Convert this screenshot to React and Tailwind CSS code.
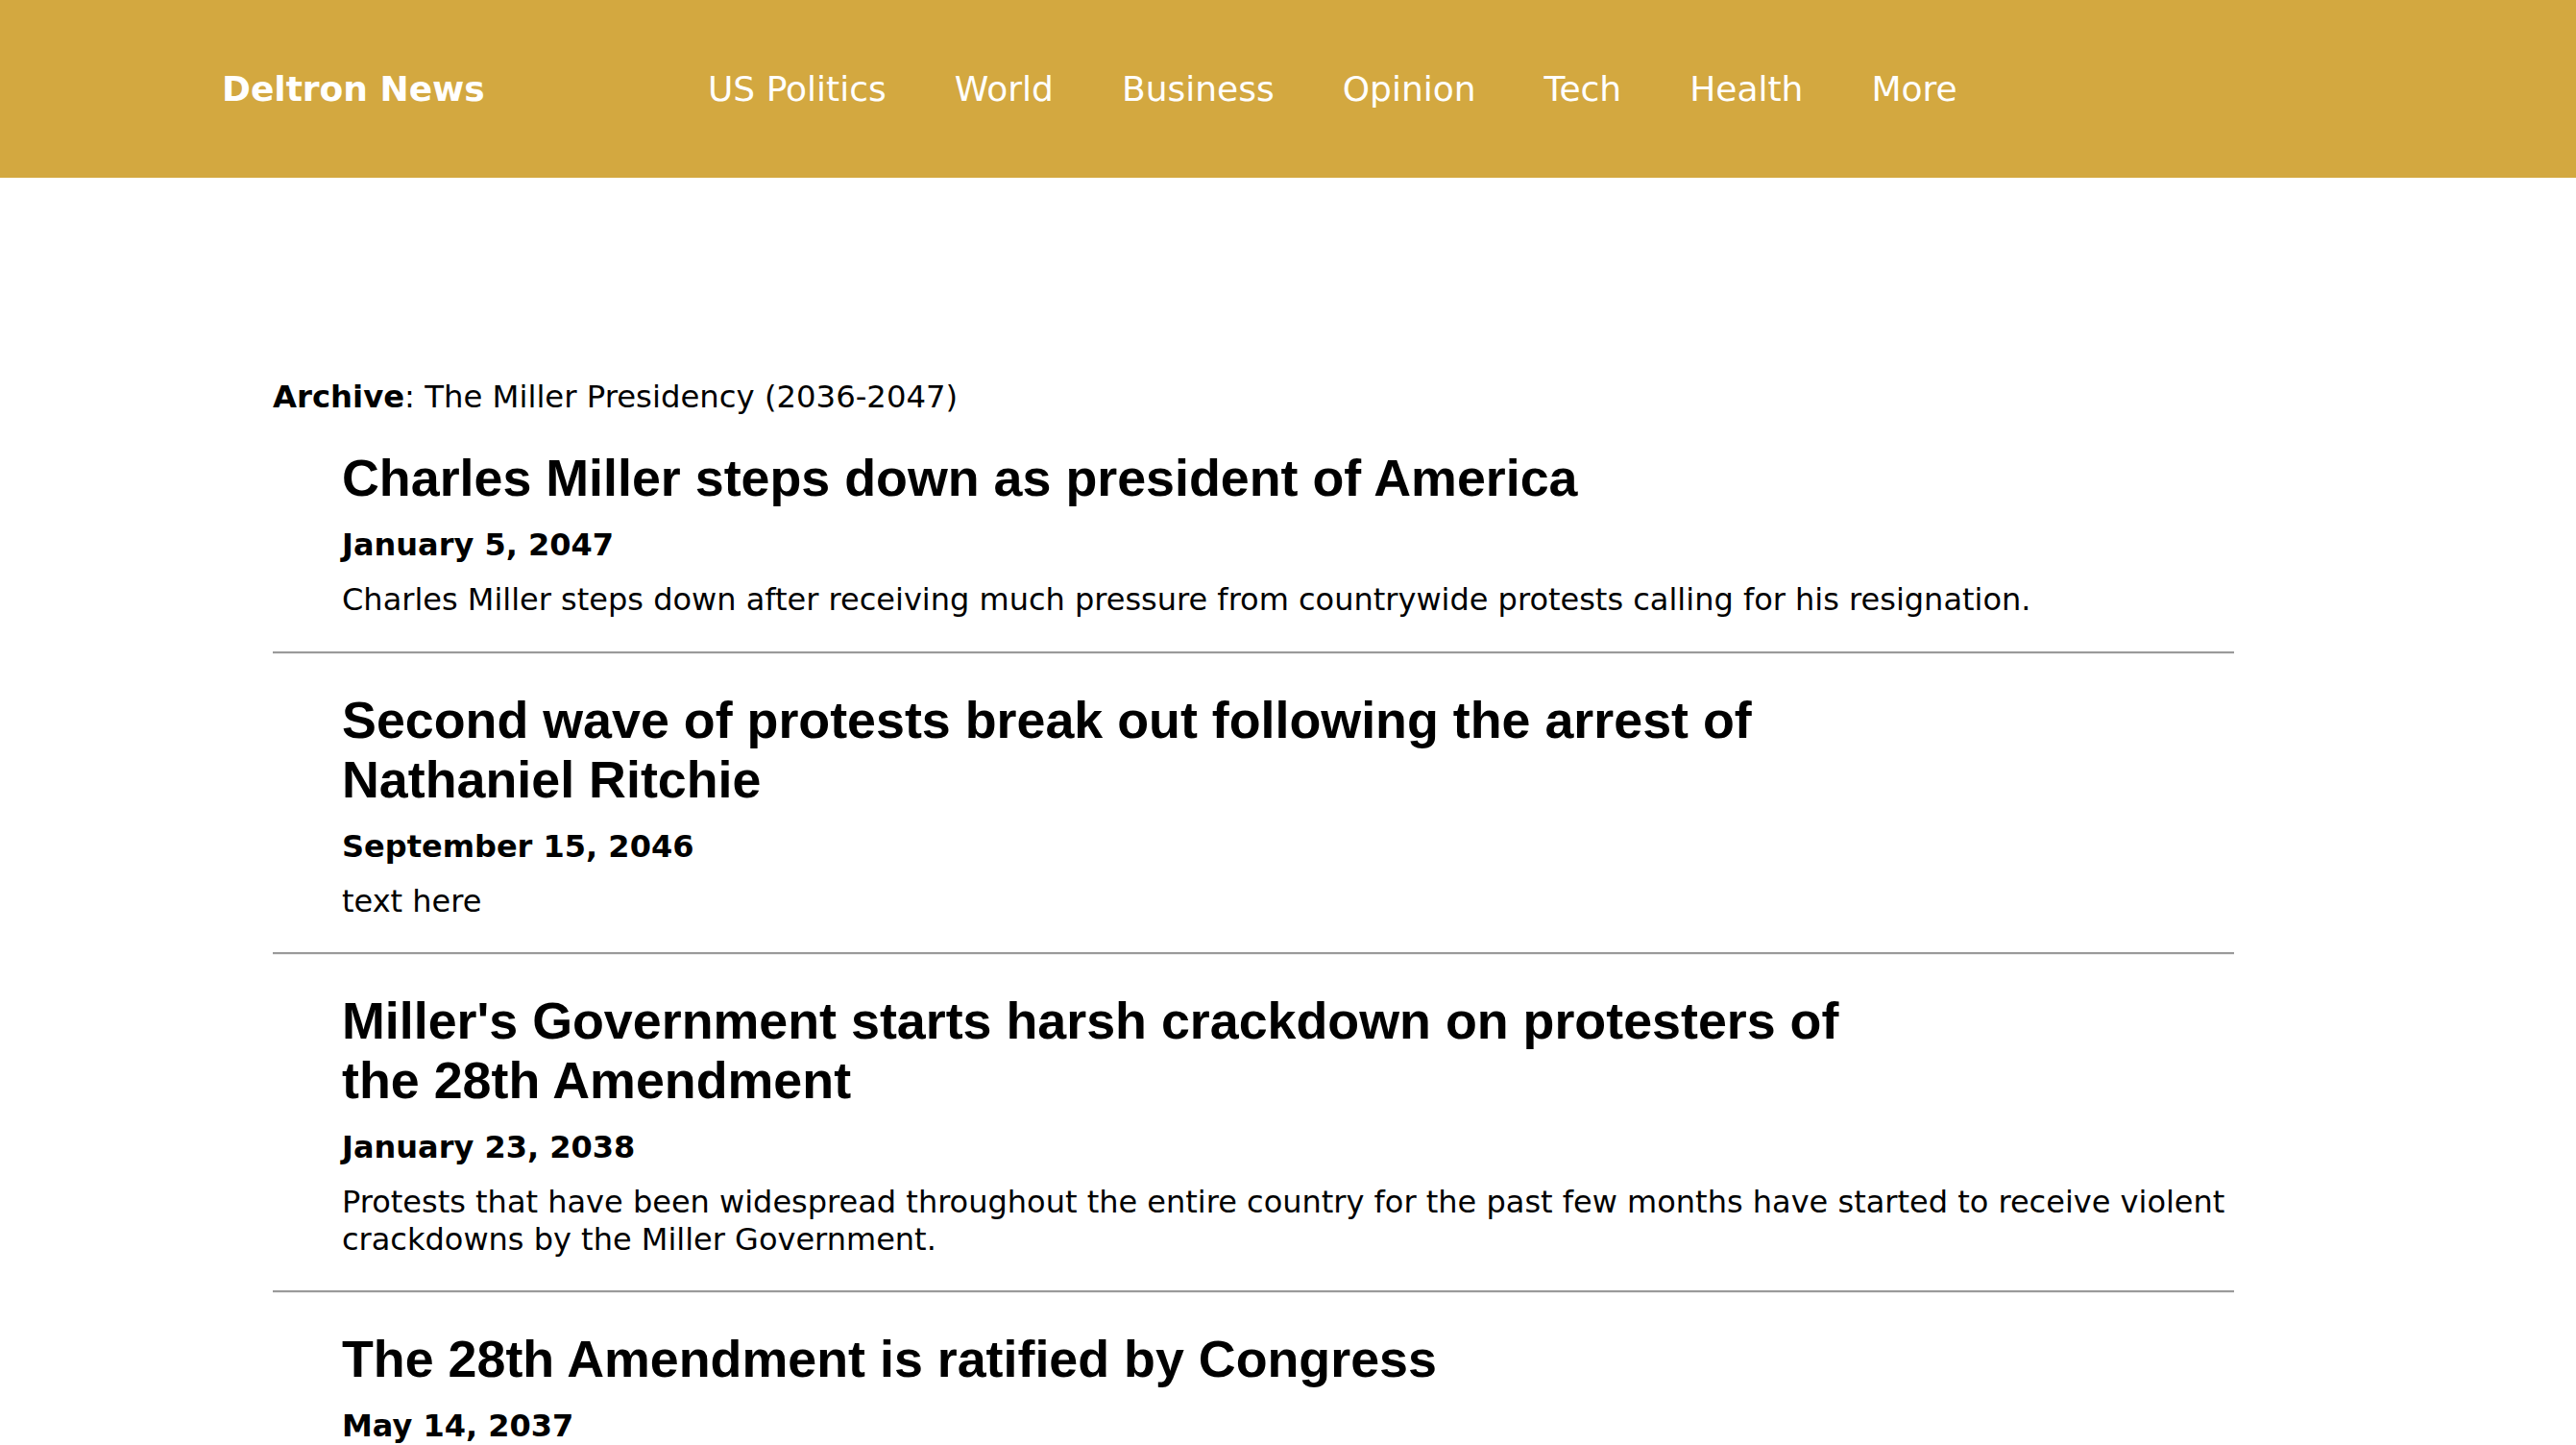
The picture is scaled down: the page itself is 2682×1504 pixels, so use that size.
import React from "react";

const navItems = ["US Politics", "World", "Business", "Opinion", "Tech", "Health", "More"];

const articles = [
  {
    title: "Charles Miller steps down as president of America",
    date: "January 5, 2047",
    text: "Charles Miller steps down after receiving much pressure from countrywide protests calling for his resignation.",
  },
  {
    title: "Second wave of protests break out following the arrest of Nathaniel Ritchie",
    date: "September 15, 2046",
    text: "text here",
  },
  {
    title: "Miller's Government starts harsh crackdown on protesters of the 28th Amendment",
    date: "January 23, 2038",
    text: "Protests that have been widespread throughout the entire country for the past few months have started to receive violent crackdowns by the Miller Government.",
  },
  {
    title: "The 28th Amendment is ratified by Congress",
    date: "May 14, 2037",
    text: "The 28th Amendment passes both houses of Congress and is sent to the states for ratification.",
  },
];

function Article({ title, date, text, first }) {
  return (
    <div className={first ? "pl-[72px] pt-[33px] pb-[34px]" : "pl-[72px] pt-[37px] pb-[33px]"}>
      <h2 className="max-w-[1600px] text-[53.8px] leading-[62px] font-bold font-['Liberation_Sans',Arial,sans-serif]">
        {title}
      </h2>
      <div className="mt-[20px] text-[32px] leading-[38px] font-bold">{date}</div>
      <p className="mt-[19px] text-[32px] leading-[39px]">{text}</p>
    </div>
  );
}

export default function App() {
  return (
    <div className="min-h-screen bg-white text-black font-['DejaVu_Sans',Verdana,sans-serif]">
      <header className="h-[185px] bg-[#d3a840] flex items-center pl-[231px] text-white text-[36px]">
        <div className="w-[506px] font-bold">Deltron News</div>
        <nav className="flex gap-[71px]">
          {navItems.map((item) => (
            <a key={item} href="#" className="text-white">
              {item}
            </a>
          ))}
        </nav>
      </header>

      <main className="pl-[284px] pt-[209px]">
        <div className="w-[2042px]">
          <div className="text-[32.3px] leading-[39px]">
            <span className="font-bold">Archive</span>: The Miller Presidency (2036-2047)
          </div>
          {articles.map((a, i) => (
            <div key={a.date}>
              <Article {...a} first={i === 0} />
              <div className="border-t-2 border-[#9a9a9a] border-b border-b-[#eeeeee]" />
            </div>
          ))}
        </div>
      </main>
    </div>
  );
}
